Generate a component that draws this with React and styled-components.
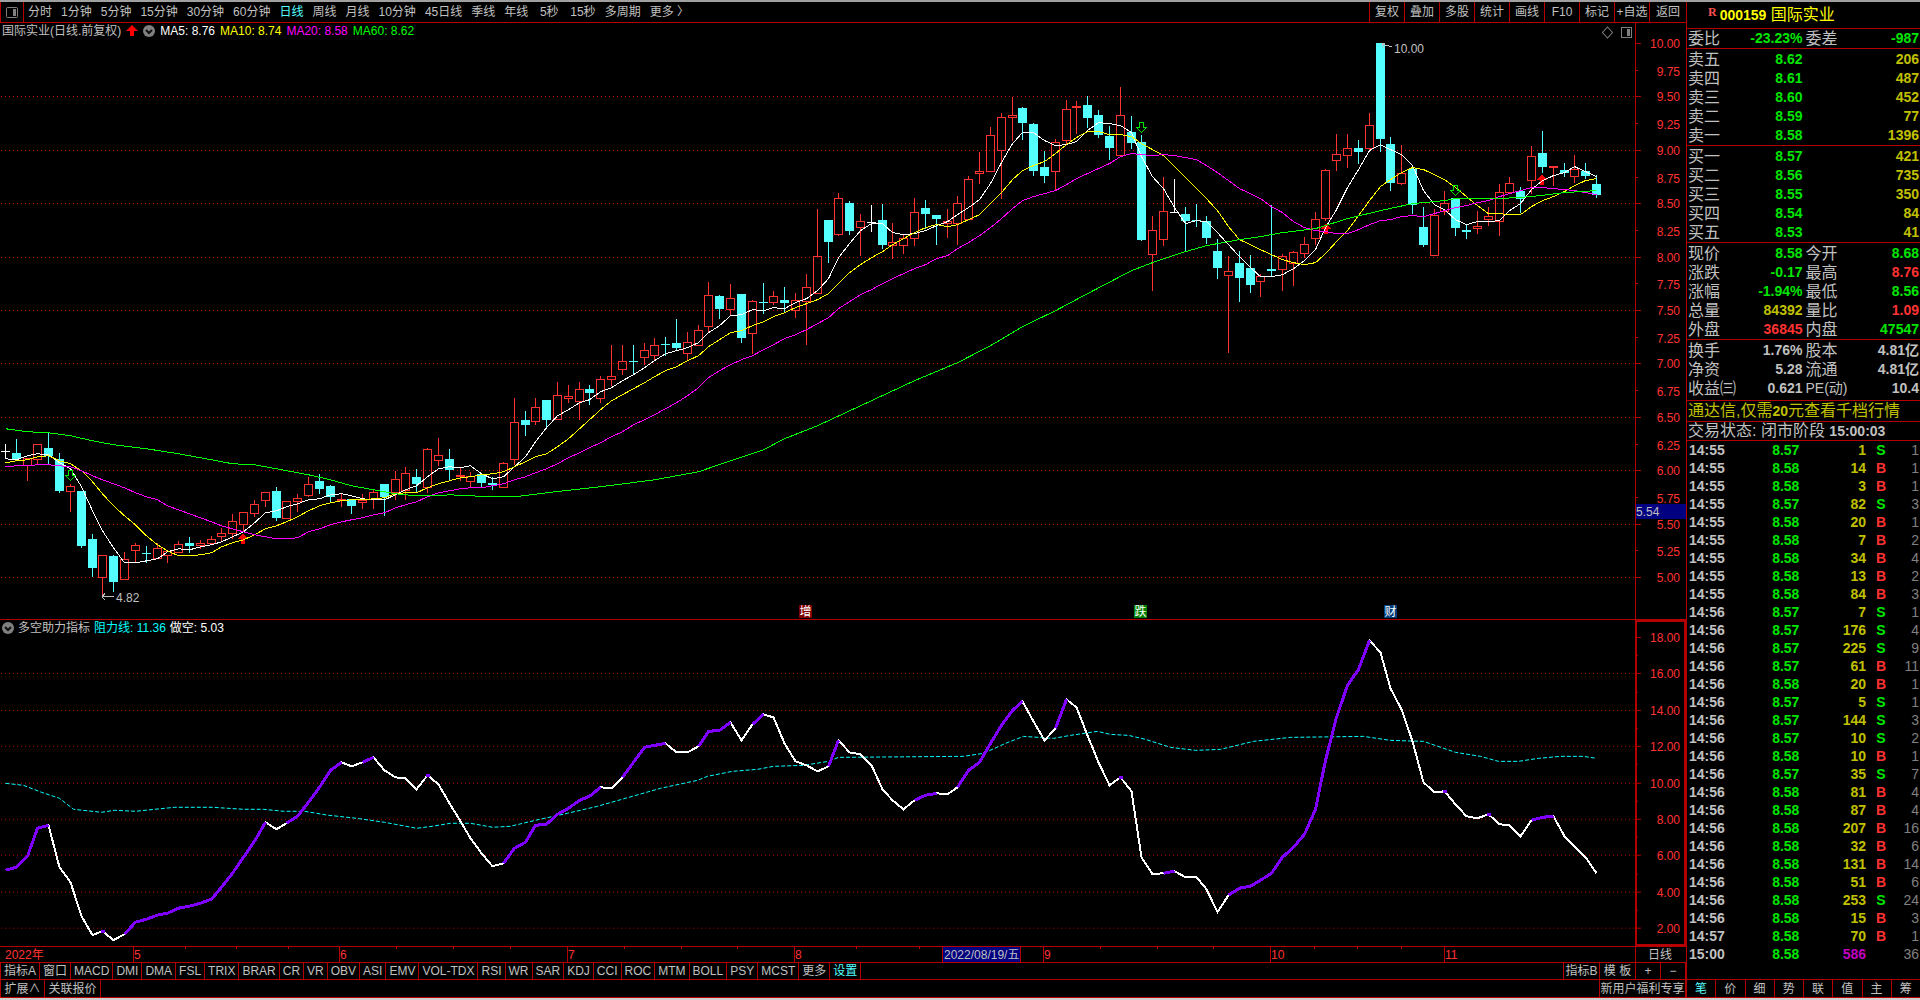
import React, { useState } from 'react'
import styled, { createGlobalStyle } from 'styled-components'

const periods = ["分时", "1分钟", "5分钟", "15分钟", "30分钟", "60分钟", "日线", "周线", "月线", "10分钟", "45日线", "季线", "年线", "5秒", "15秒", "多周期", "更多 〉"]
const tools = ["复权", "叠加", "多股", "统计", "画线", "F10", "标记", "+自选", "返回"]
const indicators = ["指标A", "窗口", "MACD", "DMI", "DMA", "FSL", "TRIX", "BRAR", "CR", "VR", "OBV", "ASI", "EMV", "VOL-TDX", "RSI", "WR", "SAR", "KDJ", "CCI", "ROC", "MTM", "BOLL", "PSY", "MCST", "更多", "设置"]
const sideTabs = ["笔", "价", "细", "势", "联", "值", "主", "筹"]

const sells = [["卖五", "8.62", 206], ["卖四", "8.61", 487], ["卖三", "8.60", 452], ["卖二", "8.59", 77], ["卖一", "8.58", 1396]]
const buys = [["买一", "8.57", 421], ["买二", "8.56", 735], ["买三", "8.55", 350], ["买四", "8.54", 84], ["买五", "8.53", 41]]

const GREEN = "#00e600"
const RED = "#ff3232"
const YELLOW = "#c0c000"
const GRAY = "#c0c0c0"

const ratio = [["委比", "-23.23%", GREEN, "委差", "-987", GREEN]]
const quotes = [
    ["现价", "8.58", GREEN, "今开", "8.68", GREEN],
    ["涨跌", "-0.17", GREEN, "最高", "8.76", RED],
    ["涨幅", "-1.94%", GREEN, "最低", "8.56", GREEN],
    ["总量", "84392", YELLOW, "量比", "1.09", RED],
    ["外盘", "36845", RED, "内盘", "47547", GREEN],
]
const basics = [
    ["换手", "1.76%", GRAY, "股本", "4.81亿", GRAY],
    ["净资", "5.28", GRAY, "流通", "4.81亿", GRAY],
    ["收益㈢", "0.621", GRAY, "PE(动)", "10.4", GRAY],
]

const deals = [
    ["14:55", "8.57", 1, "S", 1], ["14:55", "8.58", 14, "B", 1], ["14:55", "8.58", 3, "B", 1],
    ["14:55", "8.57", 82, "S", 3], ["14:55", "8.58", 20, "B", 1], ["14:55", "8.58", 7, "B", 2],
    ["14:55", "8.58", 34, "B", 4], ["14:55", "8.58", 13, "B", 2], ["14:55", "8.58", 84, "B", 3],
    ["14:56", "8.57", 7, "S", 1], ["14:56", "8.57", 176, "S", 4], ["14:56", "8.57", 225, "S", 9],
    ["14:56", "8.57", 61, "B", 11], ["14:56", "8.58", 20, "B", 1], ["14:56", "8.57", 5, "S", 1],
    ["14:56", "8.57", 144, "S", 3], ["14:56", "8.57", 10, "S", 2], ["14:56", "8.58", 10, "B", 1],
    ["14:56", "8.57", 35, "S", 7], ["14:56", "8.58", 81, "B", 4], ["14:56", "8.58", 87, "B", 4],
    ["14:56", "8.58", 207, "B", 16], ["14:56", "8.58", 32, "B", 6], ["14:56", "8.58", 131, "B", 14],
    ["14:56", "8.58", 51, "B", 6], ["14:56", "8.58", 253, "S", 24], ["14:56", "8.58", 15, "B", 3],
    ["14:57", "8.58", 70, "B", 1], ["15:00", "8.58", 586, "", 36],
]

// kind, body top, body bottom, high, low (chart units)
const candles = [
    ["w", 451, 451, 444, 458], ["c", 453, 459, 439, 459], ["r", 458, 465, 458, 481], ["r", 444, 459, 444, 464],
    ["c", 448, 456, 432, 463], ["c", 459, 491, 453, 492], ["r", 486, 491, 484, 512], ["c", 491, 546, 491, 547],
    ["c", 539, 568, 534, 576], ["r", 555, 577, 555, 595], ["c", 556, 582, 555, 591], ["r", 559, 579, 552, 579],
    ["r", 545, 550, 543, 562], ["c", 553, 553, 546, 562], ["r", 548, 558, 543, 558], ["r", 551, 555, 550, 563],
    ["r", 544, 552, 541, 552], ["c", 543, 546, 537, 552], ["r", 543, 545, 540, 549], ["r", 539, 543, 536, 543],
    ["r", 533, 536, 528, 541], ["r", 521, 533, 514, 539], ["r", 512, 524, 512, 531], ["r", 504, 513, 500, 517],
    ["r", 492, 500, 492, 507], ["c", 491, 518, 487, 520], ["r", 501, 518, 501, 518], ["r", 498, 501, 494, 512],
    ["r", 484, 495, 477, 497], ["c", 481, 489, 474, 493], ["c", 486, 497, 485, 502], ["r", 499, 500, 494, 507],
    ["c", 499, 506, 499, 513], ["r", 500, 502, 494, 509], ["r", 492, 499, 489, 509], ["c", 484, 497, 484, 515],
    ["r", 479, 492, 471, 500], ["r", 473, 490, 467, 500], ["c", 477, 484, 469, 492], ["r", 449, 487, 448, 493],
    ["r", 455, 460, 438, 466], ["c", 459, 470, 449, 480], ["r", 475, 476, 468, 481], ["r", 476, 481, 472, 487],
    ["c", 474, 483, 474, 486], ["c", 483, 485, 477, 489], ["r", 463, 487, 462, 487], ["r", 422, 459, 398, 465],
    ["c", 420, 425, 411, 435], ["r", 407, 421, 398, 425], ["c", 400, 420, 400, 426], ["r", 395, 419, 382, 419],
    ["r", 396, 398, 385, 403], ["r", 389, 401, 382, 420], ["c", 389, 393, 385, 404], ["r", 379, 398, 376, 403],
    ["r", 376, 379, 345, 386], ["r", 361, 369, 345, 375], ["c", 361, 361, 345, 373], ["r", 350, 357, 343, 365],
    ["r", 345, 355, 338, 361], ["c", 344, 344, 337, 355], ["c", 343, 348, 319, 350], ["r", 342, 353, 332, 360],
    ["r", 330, 345, 325, 345], ["r", 295, 326, 282, 332], ["c", 296, 309, 295, 318], ["r", 298, 309, 284, 316],
    ["c", 294, 338, 294, 342], ["r", 301, 333, 300, 354], ["c", 302, 302, 283, 313], ["r", 296, 302, 291, 305],
    ["c", 300, 303, 287, 311], ["r", 300, 310, 293, 318], ["r", 287, 301, 274, 345], ["r", 256, 293, 209, 293],
    ["c", 220, 242, 220, 262], ["r", 198, 234, 193, 236], ["c", 203, 231, 201, 234], ["r", 221, 227, 214, 256],
    ["w", 222, 222, 205, 231], ["c", 220, 245, 204, 248], ["r", 242, 245, 223, 259], ["r", 238, 245, 234, 254],
    ["r", 212, 238, 198, 246], ["c", 208, 214, 200, 228], ["c", 215, 219, 215, 244], ["r", 221, 223, 209, 238],
    ["r", 203, 223, 196, 245], ["r", 179, 219, 176, 219], ["r", 171, 173, 152, 184], ["r", 135, 171, 127, 171],
    ["r", 117, 150, 113, 199], ["r", 115, 117, 97, 141], ["c", 108, 123, 107, 139], ["c", 124, 171, 123, 175],
    ["c", 167, 176, 151, 182], ["r", 142, 171, 139, 190], ["r", 109, 140, 100, 145], ["r", 106, 107, 101, 134],
    ["c", 105, 118, 96, 127], ["c", 115, 135, 110, 137], ["c", 136, 148, 126, 159], ["r", 115, 155, 87, 155],
    ["c", 132, 143, 116, 148], ["c", 142, 240, 135, 240], ["r", 230, 254, 216, 291], ["r", 211, 239, 177, 246],
    ["w", 212, 212, 179, 212], ["c", 214, 221, 207, 251], ["c", 220, 220, 204, 226], ["c", 221, 238, 216, 243],
    ["c", 251, 268, 239, 278], ["r", 271, 275, 256, 353], ["c", 263, 278, 251, 301], ["c", 268, 285, 255, 292],
    ["r", 276, 281, 274, 297], ["c", 269, 271, 205, 276], ["r", 256, 269, 254, 291], ["r", 252, 263, 251, 286],
    ["r", 244, 253, 237, 258], ["r", 219, 238, 212, 245], ["r", 170, 218, 169, 221], ["r", 154, 160, 134, 171],
    ["r", 148, 155, 134, 168], ["c", 148, 152, 140, 163], ["r", 125, 148, 113, 152], ["c", 43, 139, 43, 151],
    ["c", 144, 183, 137, 190], ["r", 173, 183, 145, 185], ["c", 169, 205, 165, 213], ["c", 227, 245, 207, 246],
    ["r", 215, 255, 209, 255], ["r", 203, 211, 191, 215], ["c", 198, 228, 198, 235], ["c", 230, 232, 224, 238],
    ["r", 226, 228, 211, 234], ["r", 216, 219, 207, 226], ["r", 192, 221, 184, 236], ["r", 183, 192, 177, 192],
    ["c", 191, 199, 187, 212], ["r", 156, 180, 146, 194], ["c", 153, 167, 131, 172], ["r", 166, 167, 166, 186],
    ["c", 170, 173, 163, 176], ["r", 169, 176, 155, 183], ["c", 171, 176, 163, 178], ["c", 184, 195, 175, 197],
]

const ma5 = [
    458, 459, 455, 453, 454, 462, 468, 486, 510, 530, 547, 562, 562, 560, 558, 551, 548, 549, 546, 544,
    541, 536, 531, 522, 512, 510, 506, 503, 499, 498, 494, 493, 495, 498, 499, 499, 494, 489, 485, 476,
    468, 466, 467, 465, 473, 478, 476, 466, 456, 441, 427, 415, 409, 402, 399, 391, 387, 380, 374, 367,
    360, 353, 350, 347, 342, 332, 325, 315, 314, 309, 310, 307, 308, 302, 298, 290, 278, 257, 243, 230,
    223, 223, 232, 234, 233, 230, 225, 221, 214, 207, 199, 183, 162, 143, 132, 132, 140, 145, 144, 141,
    130, 122, 123, 125, 132, 156, 176, 188, 207, 223, 220, 221, 232, 244, 256, 267, 276, 276, 274, 268,
    260, 249, 227, 209, 187, 169, 150, 144, 149, 154, 165, 190, 204, 209, 219, 224, 221, 221, 220, 210,
    203, 189, 180, 175, 172, 166, 171, 176,
]
const ma10 = [
    462, 460, 459, 456, 455, 460, 463, 470, 481, 493, 505, 515, 524, 535, 544, 550, 555, 555, 554, 552,
    546, 542, 539, 534, 528, 525, 521, 516, 510, 505, 502, 500, 499, 499, 498, 497, 493, 492, 492, 487,
    483, 480, 477, 476, 474, 473, 471, 466, 461, 456, 453, 446, 438, 428, 419, 409, 400, 394, 388, 382,
    376, 370, 366, 360, 355, 346, 339, 332, 330, 325, 321, 316, 312, 307, 303, 299, 293, 283, 272, 264,
    257, 251, 244, 238, 232, 227, 224, 226, 224, 219, 214, 203, 192, 179, 170, 165, 161, 153, 144, 137,
    131, 131, 134, 134, 136, 143, 149, 155, 166, 177, 188, 198, 210, 226, 239, 244, 249, 254, 259, 262,
    264, 262, 253, 241, 230, 215, 200, 186, 179, 172, 167, 169, 174, 179, 187, 196, 205, 213, 213, 214,
    214, 206, 200, 196, 191, 185, 180, 178,
]
const ma20 = [
    466, 465, 465, 464, 464, 465, 466, 470, 475, 479, 483, 487, 492, 496, 499, 505, 509, 513, 517, 521,
    525, 528, 531, 534, 536, 538, 538, 537, 531, 528, 524, 521, 519, 517, 514, 512, 507, 504, 501, 496,
    492, 490, 488, 487, 487, 485, 483, 479, 476, 472, 468, 463, 457, 452, 447, 442, 436, 431, 424, 419,
    414, 408, 402, 395, 387, 377, 370, 364, 359, 355, 349, 344, 338, 334, 329, 323, 317, 308, 301, 294,
    289, 283, 278, 273, 268, 264, 258, 255, 248, 242, 235, 227, 218, 208, 200, 196, 193, 190, 184, 178,
    173, 168, 163, 156, 153, 154, 155, 154, 155, 157, 159, 165, 172, 180, 188, 193, 198, 206, 212, 221,
    227, 230, 231, 233, 233, 229, 224, 220, 219, 216, 215, 216, 213, 210, 207, 205, 202, 200, 196, 193,
    190, 187, 187, 188, 189, 190, 192, 194,
]
// the slow average is kept as [day, y] knots
const ma60 = [
    [0, 428], [2, 431], [4, 432], [6, 435], [8, 440], [10, 444], [13, 448], [16, 453], [19, 459], [21, 463],
    [23, 464], [25, 468], [28, 474], [30, 479], [32, 485], [34, 489], [36, 493], [38, 495], [40, 495], [41, 494],
    [43, 495], [45, 496], [47, 496], [50, 492], [55, 486], [60, 479], [64, 471], [67, 460], [70, 449], [72, 438],
    [75, 425], [84, 380], [88, 362], [91, 345], [94, 326], [97, 310], [100, 293], [104, 270], [106, 262], [109, 251],
    [111, 245], [112, 243], [114, 239], [116, 236], [118, 232], [121, 228], [124, 218], [127, 210], [130, 203],
    [133, 200], [134, 198], [138, 198], [141, 196], [144, 192], [147, 190],
]

const force = [
    870, 867, 856, 828, 825, 867, 882, 916, 935, 931, 940, 934, 922, 919, 915, 913, 908, 906, 903, 899,
    887, 873, 857, 841, 822, 829, 823, 816, 802, 787, 770, 762, 766, 762, 757, 770, 777, 778, 789, 775,
    784, 803, 821, 838, 853, 866, 863, 848, 842, 825, 824, 814, 808, 800, 796, 787, 788, 777, 762, 747,
    745, 743, 752, 752, 746, 731, 730, 722, 740, 724, 714, 717, 743, 761, 765, 771, 766, 740, 752, 754,
    765, 789, 800, 809, 800, 795, 793, 794, 787, 770, 762, 743, 725, 710, 701, 721, 740, 728, 699, 707,
    735, 762, 785, 777, 791, 857, 874, 873, 871, 877, 877, 889, 912, 895, 888, 886, 880, 873, 857, 847,
    834, 809, 760, 717, 685, 669, 640, 652, 688, 709, 741, 782, 792, 791, 804, 816, 818, 814, 824, 825,
    836, 820, 817, 816, 836, 846, 857, 873,
]
const resist = "5,783 23,785 41,792 59,798 73,809 82,810 101,812 114,810 135,811 174,807 212,807 243,809 263,809 283,811 304,811 328,815 356,818 384,822 416,828 432,826 450,823 470,823 492,827 510,826 535,820 567,813 597,806 625,798 660,788 697,780 707,776 732,771 757,769 773,766 803,765 828,761 838,757 963,756 983,753 1005,743 1023,736 1053,738 1070,735 1097,731 1110,734 1128,735 1145,739 1170,747 1195,750 1220,749 1253,741 1290,737 1363,736 1390,740 1423,741 1455,752 1480,756 1498,761 1518,761 1538,758 1560,756 1583,756 1596,758"

const months = [[133, "5"], [339, "6"], [567, "7"], [794, "8"], [1043, "9"], [1270, "10"], [1444, "11"]]
const weekTicks = [185, 236, 288, 396, 453, 510, 624, 681, 737, 856, 919, 1100, 1157, 1213, 1314, 1357, 1401]
const downMarks = [[70, 470], [1141, 122], [1455, 185]]
const upMarks = [[243, 533], [1326, 223], [1542, 174]]
const badges = [[799, "增", "#800000"], [1134, "跌", "#008000"], [1384, "财", "#003c78"]]

const dayX = (i) => Math.round(5 + i * 10.823)
const priceY = (p) => Math.round(43 + (10 - p) * 106.8)
const forceY = (v) => Math.round(637 + (18 - v) * 18.2)
const toPoints = (list) => list.map((y, i) => `${dayX(i)},${y}`).join(" ")

// runs of consecutive rising days, a run of one day is drawn as a short dash
const risingRuns = () => {
    const runs = []
    let run = []
    force.forEach((y, i) => {
        if (i === 0 || y < force[i - 1]) {
            run.push([dayX(i), y])
        } else {
            run.length && runs.push(run)
            run = []
        }
    })
    run.length && runs.push(run)
    return runs.map((r) => r.length > 1 ? r : [[r[0][0] - 2, r[0][1]], [r[0][0] + 2, r[0][1]]])
}

const Candle = ({ i, data }) => {
    const [kind, top, bottom, high, low] = data
    const x = dayX(i)
    if (kind === "r") {
        return (
            <g fill={RED}>
                {high < top && <rect x={x} y={high} width="1" height={top - high} />}
                {low > bottom && <rect x={x} y={bottom} width="1" height={low - bottom} />}
                <rect x={x - 4 + 0.5} y={top + 0.5} width="8" height={bottom - top} fill="none" stroke={RED} />
            </g>
        )
    }
    return (
        <g fill={kind === "w" ? "#ffffff" : "#54ffff"}>
            <rect x={x} y={high} width="1" height={low - high + 1} />
            <rect x={x - 4} y={top} width="9" height={Math.max(1, bottom - top)} />
        </g>
    )
}

const PriceChart = () => {
    const levels = Array.from({ length: 21 }, (_, i) => 10 - i * 0.25)
    return (
        <Plot viewBox="0 23 1686 596" preserveAspectRatio="none">
            {levels.map((p, i) => {
                const y = priceY(p)
                const major = i % 2 === 0
                return (
                    <g key={p}>
                        {major && i > 0 && <GridLine x1="1" x2="1635" y1={y + 0.5} y2={y + 0.5} />}
                        <Rule x1="1636" x2={major ? 1641 : 1638} y1={y + 0.5} y2={y + 0.5} />
                        <AxisText x="1680" y={major ? y + 5 : y + 6}>{p.toFixed(2)}</AxisText>
                    </g>
                )
            })}
            <Rule x1="1635.5" x2="1635.5" y1="23" y2="619" />
            {candles.map((c, i) => <Candle key={i} i={i} data={c} />)}
            {upMarks.map(([x, y]) => (
                <path key={x} fill="#ff0000" d={`M${x} ${y}l6 6h-4v5h-4v-5h-4z`} />
            ))}
            <g transform="translate(0.5 0.5)">
                <Line $color="#ffffff" points={toPoints(ma5)} />
                <Line $color="#ffff00" points={toPoints(ma10)} />
                <Line $color="#ff00ff" points={toPoints(ma20)} />
                <Line $color="#00ff00" points={ma60.map(([i, y]) => `${dayX(i)},${y}`).join(" ")} />
            </g>
            {downMarks.map(([x, y]) => (
                <path key={x} fill="none" stroke="#00e600" d={`M${x - 1.5} ${y + 0.5}h4v5h3l-5 5l-5 -5h3z`} />
            ))}
            <path d="M114 596.5h-12M105 593l-3 3.5l3 3M1392 47l-10 -3M1385 43l-3 1l2 4" fill="none" stroke="#c0c0c0" />
            <NoteText x="116" y="602">4.82</NoteText>
            <NoteText x="1394" y="53">10.00</NoteText>
            <path d="M1607.5 27l5 5.5l-5 5.5l-5 -5.5z" fill="none" stroke="#808080" shapeRendering="auto" />
            <path d="M1621.5 27.5h10v10h-10z" fill="none" stroke="#808080" />
            <rect x="1627" y="29" width="3" height="7" fill="#808080" />
            {badges.map(([x, text, color]) => (
                <g key={x}>
                    <rect x={x} y="605" width="13" height="13" fill={color} />
                    <BadgeText x={x + 6.5} y="616">{text}</BadgeText>
                </g>
            ))}
            <rect x="1636" y="504" width="50" height="15" fill="#000080" />
            <NoteText x="1636" y="516">5.54</NoteText>
        </Plot>
    )
}

const ForceChart = () => {
    const levels = Array.from({ length: 17 }, (_, i) => 18 - i)
    return (
        <Plot viewBox="0 620 1686 326" preserveAspectRatio="none">
            {levels.map((v, i) => {
                const y = forceY(v)
                const major = i % 2 === 0
                return (
                    <g key={v}>
                        {major && i > 0 && <GridLine x1="1" x2="1635" y1={y + 0.5} y2={y + 0.5} />}
                        <Rule x1="1637" x2={major ? 1641 : 1638} y1={y + 0.5} y2={y + 0.5} />
                        {major && <AxisText x="1680" y={y + 5}>{v.toFixed(2)}</AxisText>}
                    </g>
                )
            })}
            <rect x="1636" y="621" width="49" height="324" fill="none" stroke="#b40000" strokeWidth="2" />
            <g transform="translate(0.5 0.5)">
                <Line $color="#00ffff" strokeDasharray="4 2" points={resist} />
                <Line $color="#ffffff" $width={2} points={toPoints(force)} />
                {risingRuns().map((run, i) => <Line key={i} $color="#8000ff" $width={3} points={run.map((p) => p.join(",")).join(" ")} />)}
            </g>
        </Plot>
    )
}

const TimeAxis = () => (
    <Plot viewBox="0 947 1686 15" preserveAspectRatio="none">
        <TimeText x="5" y="959">2022年</TimeText>
        {months.map(([x, text]) => (
            <g key={x}>
                <Rule x1={x + 0.5} x2={x + 0.5} y1="947" y2="962" />
                <TimeText x={x + 1} y="959">{text}</TimeText>
            </g>
        ))}
        {weekTicks.map((x) => <Rule key={x} x1={x + 0.5} x2={x + 0.5} y1="947" y2="949" />)}
        <rect x="942.5" y="946.5" width="78" height="16" fill="#000080" stroke="#b40000" />
        <NoteText x="944" y="959">2022/08/19/五</NoteText>
        <Rule x1="1635.5" x2="1635.5" y1="947" y2="962" />
        <NoteText x="1648" y="959">日线</NoteText>
    </Plot>
)

const FoldIcon = () => (
    <svg width="12" height="12" viewBox="0 0 12 12">
        <circle cx="6" cy="6" r="6" fill="#808080" />
        <path d="M3 5l3 3l3 -3" fill="none" stroke="#101010" strokeWidth="2" />
    </svg>
)

const PairTable = ({ rows }) => (
    <Table>
        <colgroup><col style={{ width: "50%" }} /><col /></colgroup>
        <tbody>
            {rows.map(([k1, v1, c1, k2, v2, c2]) => (
                <tr key={k1}>
                    <td><Pair><Label>{k1}</Label><Num $color={c1}>{v1}</Num></Pair></td>
                    <td><Pair $last><Label $small={k2.startsWith("PE")}>{k2}</Label><Num $color={c2}>{v2}</Num></Pair></td>
                </tr>
            ))}
        </tbody>
    </Table>
)

const BookTable = ({ rows }) => (
    <Table>
        <colgroup><col style={{ width: "50%" }} /><col /></colgroup>
        <tbody>
            {rows.map(([name, price, vol]) => (
                <tr key={name}>
                    <td><Pair><Label>{name}</Label><Num $color={GREEN}>{price}</Num></Pair></td>
                    <td><Pair $last><span /><Num $color={YELLOW}>{vol}</Num></Pair></td>
                </tr>
            ))}
        </tbody>
    </Table>
)

export default function App() {
    const [period, setPeriod] = useState("日线")
    const [tab, setTab] = useState("笔")

    return (
        <Page>
            <GlobalStyle />
            <Main>
                <Toolbar>
                    <IconButton aria-label="侧栏">
                        <svg width="12" height="11" viewBox="0 0 12 11">
                            <rect x="0.5" y="0.5" width="11" height="10" rx="1" fill="none" stroke="#808080" />
                            <rect x="7" y="2" width="3" height="7" fill="#808080" />
                        </svg>
                    </IconButton>
                    <Periods>
                        {periods.map((p) => (
                            <Period key={p} $active={p === period} onClick={() => setPeriod(p)}>{p}</Period>
                        ))}
                    </Periods>
                    <Tools>
                        {tools.map((t) => <Tool key={t}>{t}</Tool>)}
                    </Tools>
                </Toolbar>

                <PricePane>
                    <Legend>
                        <span>国际实业(日线.前复权)</span>
                        <svg width="12" height="12" viewBox="0 0 12 12">
                            <path d="M6 0l6 6h-4v5h-4v-5h-4z" fill="#ff0000" />
                        </svg>
                        <FoldIcon />
                        <Series $color="#ffffff">MA5: 8.76</Series>
                        <Series $color="#ffff00">MA10: 8.74</Series>
                        <Series $color="#ff00ff">MA20: 8.58</Series>
                        <Series $color="#00ff00">MA60: 8.62</Series>
                    </Legend>
                    <PriceChart />
                </PricePane>

                <ForcePane>
                    <Legend $tight>
                        <FoldIcon />
                        <span>多空助力指标</span>
                        <Series $color="#00ffff">阻力线: 11.36</Series>
                        <Series $color="#ffffff">做空: 5.03</Series>
                    </Legend>
                    <ForceChart />
                </ForcePane>

                <TimeRow><TimeAxis /></TimeRow>

                <TabRow>
                    {indicators.map((name, i) => <Tab key={name + i} $active={name === "设置"}>{name}</Tab>)}
                    <Spacer />
                    <Tab $wide={36}>指标B</Tab>
                    <Tab $wide={36}>模 板</Tab>
                    <Tab $wide={25}>+</Tab>
                    <Tab $wide={25}>−</Tab>
                </TabRow>
                <FootRow>
                    <Tab $wide={44}>扩展∧</Tab>
                    <Tab $wide={56}>关联报价</Tab>
                    <Spacer />
                    <Tab $wide={86}>新用户福利专享</Tab>
                </FootRow>
            </Main>

            <Side>
                <Title><sup>R</sup><b>000159</b> 国际实业</Title>
                <Box><PairTable rows={ratio} /></Box>
                <Box $top={1}><BookTable rows={sells} /></Box>
                <Box $top={1}><BookTable rows={buys} /></Box>
                <Box $top={1}><PairTable rows={quotes} /></Box>
                <Box $top={1} $bottom={2}><PairTable rows={basics} /></Box>
                <Promo href="#level2">通达信,仅需<b>20</b>元查看千档行情</Promo>
                <Status>交易状态: 闭市阶段 <b>15:00:03</b></Status>
                <Deals>
                    <Table $row={18}>
                        <colgroup>
                            <col style={{ width: "24%" }} /><col style={{ width: "24%" }} />
                            <col style={{ width: "29%" }} /><col style={{ width: "13%" }} /><col />
                        </colgroup>
                        <tbody>
                            {deals.map(([time, price, vol, side, count], i) => (
                                <tr key={i}>
                                    <td><Num>{time}</Num></td>
                                    <Right><Num $color={GREEN}>{price}</Num></Right>
                                    <Right><Num $color={side ? YELLOW : "#c000c0"}>{vol}</Num></Right>
                                    <Center><Num $color={side === "S" ? GREEN : RED}>{side}</Num></Center>
                                    <Right><Count>{count}</Count></Right>
                                </tr>
                            ))}
                        </tbody>
                    </Table>
                </Deals>
                <SideTabs>
                    {sideTabs.map((t) => (
                        <SideTab key={t} $active={t === tab} onClick={() => setTab(t)}>{t}</SideTab>
                    ))}
                </SideTabs>
            </Side>
        </Page>
    )
}

const GlobalStyle = createGlobalStyle`
*{
    box-sizing: border-box;
}
body{
    margin: 0;
    background: #000000;
    color: #c0c0c0;
    font-family: "Liberation Sans", "Noto Sans CJK SC", sans-serif;
    font-size: 12px;
}
button{
    background: none;
    border: none;
    padding: 0;
    margin: 0;
    color: inherit;
    font: inherit;
    line-height: 18px;
    white-space: nowrap;
    cursor: pointer;
}
`

const Page = styled.div`
    height: 100vh;
    min-height: 1000px;
    display: grid;
    grid-template-columns: minmax(0, 1fr) 234px;
    border-top: 2px solid #a0a0a0;
    border-bottom: 2px solid #d0d0d0;
`
const Main = styled.main`
    display: flex;
    flex-direction: column;
    min-width: 0;
    min-height: 0;
`

const Toolbar = styled.div`
    display: flex;
    height: 21px;
    flex: none;
    border-bottom: 1px solid #b40000;
`
const IconButton = styled.button`
    width: 24px;
    border-left: 1px solid #b40000;
    border-right: 1px solid #b40000;
    display: flex;
    align-items: center;
    justify-content: center;
`
const Periods = styled.nav`
    display: flex;
    gap: 9px;
    padding-left: 4px;
    flex: 1;
`
const Period = styled.button`
    min-width: 24px;
    color: ${(p) => p.$active ? "#54ffff" : "#c0c0c0"};
`
const Tools = styled.div`
    display: flex;
`
const Tool = styled.button`
    width: 35px;
    border-left: 1px solid #b40000;
    &:last-child{
        width: 37px;
    }
`

const PricePane = styled.section`
    position: relative;
    flex: 597 1 0;
    min-height: 0;
    border-bottom: 1px solid #b40000;
`
const ForcePane = styled.section`
    position: relative;
    flex: 326 1 0;
    min-height: 0;
`
const Legend = styled.div`
    position: absolute;
    top: 0;
    left: 2px;
    line-height: 16px;
    display: flex;
    align-items: center;
    gap: ${(p) => p.$tight ? 4 : 5}px;
`
const Series = styled.span`
    color: ${(p) => p.$color};
`
const Plot = styled.svg`
    display: block;
    width: 100%;
    height: 100%;
    shape-rendering: crispEdges;
`
const GridLine = styled.line`
    stroke: #b40000;
    stroke-dasharray: 1 3;
`
const Rule = styled.line`
    stroke: #b40000;
`
const Line = styled.polyline`
    fill: none;
    stroke: ${(p) => p.$color};
    stroke-width: ${(p) => p.$width || 1};
`
const AxisText = styled.text`
    fill: #ff3232;
    text-anchor: end;
`
const TimeText = styled.text`
    fill: #ff3232;
`
const NoteText = styled.text`
    fill: #c0c0c0;
`
const BadgeText = styled.text`
    fill: #ffffff;
    text-anchor: middle;
`

const TimeRow = styled.div`
    height: 16px;
    flex: none;
    border-top: 1px solid #b40000;
`
const TabRow = styled.div`
    display: flex;
    height: 17px;
    flex: none;
    border-top: 1px solid #b40000;
    border-left: 1px solid #b40000;
`
const FootRow = styled(TabRow)`
    height: 19px;
    border-bottom: 1px solid #b40000;
`
const Tab = styled.button`
    ${(p) => p.$wide ? `width: ${p.$wide}px;` : "padding: 0 3px;"}
    line-height: 16px;
    border-right: 1px solid #b40000;
    color: ${(p) => p.$active ? "#54ffff" : "#c0c0c0"};
`
const Spacer = styled.div`
    flex: 1;
    border-right: 1px solid #b40000;
`

const Side = styled.aside`
    display: flex;
    flex-direction: column;
    border-left: 1px solid #b40000;
    font-size: 16px;
    min-width: 0;
    overflow: hidden;
    b{
        font-size: 14px;
        font-weight: 700;
    }
`
const Title = styled.h1`
    margin: 0;
    height: 27px;
    line-height: 26px;
    padding-left: 21px;
    font-size: 16px;
    font-weight: 400;
    color: #ffff00;
    border-bottom: 1px solid #b40000;
    sup{
        color: #ff5050;
        font: bold 12px "Liberation Serif", serif;
        vertical-align: 4px;
        margin-right: 3px;
    }
`
const Box = styled.div`
    padding: ${(p) => p.$top || 0}px 1px ${(p) => p.$bottom || 0}px;
    border-bottom: 1px solid #b40000;
`
const Table = styled.table`
    width: 100%;
    table-layout: fixed;
    border-collapse: collapse;
    td{
        padding: 0;
        height: ${(p) => p.$row || 19}px;
        line-height: ${(p) => p.$row || 19}px;
    }
`
const Pair = styled.div`
    display: flex;
    justify-content: space-between;
    height: 19px;
    padding-left: ${(p) => p.$last ? 2 : 0}px;
    padding-right: ${(p) => p.$last ? 0 : 1}px;
`
const Label = styled.span`
    font-size: ${(p) => p.$small ? 14 : 16}px;
`
const Num = styled.span`
    font-size: 14px;
    font-weight: 700;
    color: ${(p) => p.$color || "#c0c0c0"};
`
const Count = styled.span`
    font-size: 14px;
    color: #808080;
`
const Promo = styled.a`
    height: 21px;
    line-height: 20px;
    padding-left: 1px;
    color: #c0c000;
    text-decoration: none;
    white-space: nowrap;
    border-bottom: 1px solid #b40000;
`
const Status = styled.div`
    height: 19px;
    line-height: 18px;
    padding-left: 1px;
    white-space: nowrap;
    border-bottom: 1px solid #b40000;
`
const Deals = styled.div`
    flex: 1;
    padding: 0 1px 0 2px;
    td{
        vertical-align: top;
    }
    span{
        display: block;
    }
`
const Right = styled.td`
    text-align: right;
`
const Center = styled.td`
    text-align: center;
`
const SideTabs = styled.nav`
    display: flex;
    height: 19px;
    border-top: 1px solid #b40000;
    border-bottom: 1px solid #b40000;
    font-size: 12px;
`
const SideTab = styled.button`
    flex: 1;
    color: ${(p) => p.$active ? "#54ffff" : "#c0c0c0"};
    & + &{
        border-left: 1px solid #b40000;
    }
`
